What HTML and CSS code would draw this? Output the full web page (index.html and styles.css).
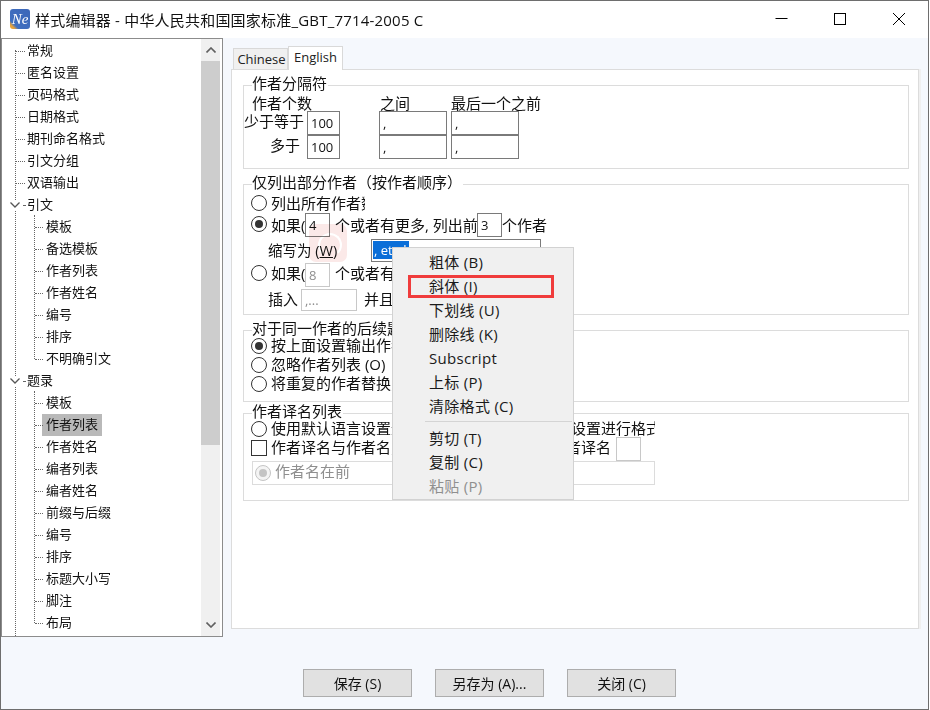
FILE: index.html
```html
<!DOCTYPE html>
<html lang="zh-CN">
<head>
<meta charset="utf-8">
<title>样式编辑器</title>
<link rel="stylesheet" href="styles.css">
</head>
<body>
<div class="window">
  <header class="titlebar">
    <div class="app-icon"><span>Ne</span></div>
    <div class="title">样式编辑器 - 中华人民共和国国家标准_GBT_7714-2005 C</div>
    <div class="win-controls">
      <svg class="win-btn" width="14" height="14" viewBox="0 0 14 14"><path d="M1.5 6.5h12" stroke="#000" fill="none"/></svg>
      <svg class="win-btn" width="14" height="14" viewBox="0 0 14 14"><rect x="1.5" y="1.5" width="11" height="11" stroke="#000" fill="none"/></svg>
      <svg class="win-btn" width="14" height="14" viewBox="0 0 14 14"><path d="M1 1l12 12M13 1L1 13" stroke="#000" fill="none"/></svg>
    </div>
  </header>

  <div class="main">
    <aside class="tree-panel">
      <div class="tree">
        <div class="row lvl0">常规</div>
        <div class="row lvl0">匿名设置</div>
        <div class="row lvl0">页码格式</div>
        <div class="row lvl0">日期格式</div>
        <div class="row lvl0">期刊命名格式</div>
        <div class="row lvl0">引文分组</div>
        <div class="row lvl0">双语输出</div>
        <div class="row lvl0 parent"><svg class="chev" width="10" height="6" viewBox="0 0 10 6"><path d="M.5.5L5 5 9.5.5" stroke="#555" stroke-width="1.3" fill="none"/></svg>引文</div>
        <div class="children">
          <div class="row lvl1">模板</div>
          <div class="row lvl1">备选模板</div>
          <div class="row lvl1">作者列表</div>
          <div class="row lvl1">作者姓名</div>
          <div class="row lvl1">编号</div>
          <div class="row lvl1">排序</div>
          <div class="row lvl1">不明确引文</div>
        </div>
        <div class="row lvl0 parent"><svg class="chev" width="10" height="6" viewBox="0 0 10 6"><path d="M.5.5L5 5 9.5.5" stroke="#555" stroke-width="1.3" fill="none"/></svg>题录</div>
        <div class="children">
          <div class="row lvl1">模板</div>
          <div class="row lvl1"><span class="selected">作者列表</span></div>
          <div class="row lvl1">作者姓名</div>
          <div class="row lvl1">编者列表</div>
          <div class="row lvl1">编者姓名</div>
          <div class="row lvl1">前缀与后缀</div>
          <div class="row lvl1">编号</div>
          <div class="row lvl1">排序</div>
          <div class="row lvl1">标题大小写</div>
          <div class="row lvl1">脚注</div>
          <div class="row lvl1">布局</div>
        </div>
      </div>
      <div class="scrollbar">
        <div class="sb-btn"><svg width="10" height="6" viewBox="0 0 10 6"><path d="M.5 5.5L5 1l4.5 4.5" stroke="#606060" stroke-width="1.6" fill="none"/></svg></div>
        <div class="sb-thumb"></div>
        <div class="sb-track"></div>
        <div class="sb-btn"><svg width="10" height="6" viewBox="0 0 10 6"><path d="M.5.5L5 5l4.5-4.5" stroke="#606060" stroke-width="1.6" fill="none"/></svg></div>
      </div>
    </aside>

    <section class="tabs-area">
      <div class="tab-strip">
        <div class="tab">Chinese</div>
        <div class="tab active">English</div>
      </div>
      <div class="pane">
        <div class="group g1">
          <div class="legend">作者分隔符</div>
          <div class="sep-head">
            <span class="h-count">作者个数</span>
            <span class="h-between">之间</span>
            <span>最后一个之前</span>
          </div>
          <div class="sep-row">
            <span class="sep-label">少于等于</span>
            <span class="input dark num">100</span>
            <span class="input dark wide gap-a">,</span>
            <span class="input dark wide gap-b">,</span>
          </div>
          <div class="sep-row">
            <span class="sep-label">多于</span>
            <span class="input dark num">100</span>
            <span class="input dark wide gap-a">,</span>
            <span class="input dark wide gap-b">,</span>
          </div>
        </div>

        <div class="group g2">
          <div class="legend">仅列出部分作者（按作者顺序）</div>
          <div class="opt h-a"><i class="radio"></i><span class="clip-all">列出所有作者数</span></div>
          <div class="opt h-b"><i class="radio on"></i><span class="if">如果(</span><span class="input dark small">4</span><span class="after">个或者有更多, 列出前</span><span class="input dark small">3</span><span>个作者</span></div>
          <div class="opt h-c indent"><span class="abbr-label">缩写为 (<u>W</u>)</span><span class="input dark abbr"><b class="sel">, et al.</b></span></div>
          <div class="opt h-b raise"><i class="radio"></i><span class="if">如果(</span><span class="input pale small muted">8</span><span class="after">个或者有更多</span></div>
          <div class="opt h-d indent"><span class="ins-label">插入</span><span class="input pale ins muted">,...</span><span class="and">并且</span></div>
        </div>

        <div class="group g3">
          <div class="legend tight">对于同一作者的后续题录</div>
          <div class="opt h-e"><i class="radio on"></i><span>按上面设置输出作者列表</span></div>
          <div class="opt h-e"><i class="radio"></i><span>忽略作者列表 (O)</span></div>
          <div class="opt h-e"><i class="radio"></i><span>将重复的作者替换为</span></div>
        </div>

        <div class="group g4">
          <div class="legend tight">作者译名列表</div>
          <div class="opt h-e"><i class="radio"></i><span class="clip-lang">使用默认语言设置进行格式，或按照每种语言设置进行格式</span></div>
          <div class="opt h-e"><i class="check"></i><span class="trans">作者译名与作者名之间插入分隔符<i class="pad"></i>后输出作者译名</span><span class="input pale small blank"></span></div>
          <div class="order-box"><i class="radio dis on"></i><span class="muted">作者名在前</span></div>
        </div>
      </div>
    </section>
  </div>

  <footer class="footer">
    <button class="btn">保存 (S)</button>
    <button class="btn">另存为 (A)...</button>
    <button class="btn">关闭 (C)</button>
  </footer>

  <div class="pink-mark"></div>

  <nav class="menu">
    <div class="m-item">粗体 (B)</div>
    <div class="m-item hl">斜体 (I)</div>
    <div class="m-item">下划线 (U)</div>
    <div class="m-item">删除线 (K)</div>
    <div class="m-item">Subscript</div>
    <div class="m-item">上标 (P)</div>
    <div class="m-item">清除格式 (C)</div>
    <div class="m-sep"></div>
    <div class="m-item">剪切 (T)</div>
    <div class="m-item">复制 (C)</div>
    <div class="m-item off">粘贴 (P)</div>
  </nav>
</div>
</body>
</html>
```
FILE: styles.css
```css
* { box-sizing: border-box; }
html, body { margin: 0; padding: 0; background: #fff; }
body { width: 930px; height: 710px; overflow: hidden; font-family: "Open Sans", "Noto Sans CJK SC", sans-serif; color: #111; }
i, b { font-style: normal; font-weight: normal; }

.window { position: relative; width: 929px; height: 710px; border: 1px solid #6e6e6e; background: #f5f8fd; display: flex; flex-direction: column; }

.titlebar { height: 37px; flex: none; background: #fff; display: flex; align-items: center; padding-left: 9px; }
.app-icon { width: 20px; height: 20px; margin-bottom: 1px; border-radius: 3px; background: linear-gradient(45deg, #e8a33a 0%, #e8a33a 12%, #3f6fc0 22%, #3c67b8 100%); display: flex; align-items: center; justify-content: center; }
.app-icon span { color: #fff; font: italic 15px "Liberation Serif", serif; }
.title { margin-left: 5px; font-size: 15px; line-height: 20px; letter-spacing: .2px; white-space: nowrap; flex: 1; }
.win-controls { display: flex; justify-content: flex-end; margin: 0 22px 1px 0; }
.win-btn { display: block; margin-left: 45px; }

.main { flex: none; height: 599px; display: flex; align-items: flex-start; }

.tree-panel { width: 222px; height: 599px; background: #fff; border: 1px solid #8c8c8c; display: flex; overflow: hidden; }
.tree { position: relative; width: 199px; height: 597px; overflow: hidden; flex: none; padding-top: 1px; font-size: 13px; }
.tree::before { content: ""; position: absolute; left: 13px; top: 11px; bottom: 0; border-left: 1px dotted #666; }
.row { position: relative; height: 22px; line-height: 20px; white-space: nowrap; }
.lvl0 { padding-left: 25px; }
.lvl1 { padding-left: 44px; }
.lvl0::before { content: ""; position: absolute; left: 14px; top: 11px; width: 9px; border-top: 1px dotted #666; }
.lvl1::before { content: ""; position: absolute; left: 33px; top: 11px; width: 8px; border-top: 1px dotted #666; }
.parent::before { left: 21px; width: 2px; }
.chev { position: absolute; left: 8px; top: 8px; background: #fff; box-shadow: 0 0 0 2px #fff; }
.children { position: relative; }
.children::before { content: ""; position: absolute; left: 32px; top: -1px; height: calc(100% - 10px); border-left: 1px dotted #666; }
.selected { display: inline-block; vertical-align: top; height: 22px; margin-left: -4px; padding: 0 4px; background: #b9b9b9; }

.scrollbar { width: 19px; flex: none; margin-right: 2px; display: flex; flex-direction: column; background: #f0f0f0; height: 597px; }
.sb-btn { height: 22px; flex: none; display: flex; align-items: center; justify-content: center; }
.sb-thumb { height: 384px; flex: none; background: #cdcdcd; }
.sb-track { flex: 1; }

.tabs-area { width: 692px; margin-left: 8px; padding-top: 7px; height: 599px; display: flex; flex-direction: column; }
.tab-strip { display: flex; align-items: flex-end; height: 24px; padding-left: 2px; position: relative; z-index: 1; }
.tab { width: 55px; height: 21px; border: 1px solid #d9d9d9; border-bottom: none; background: #f0f0f0; font-size: 13px; line-height: 20px; text-align: center; color: #222; padding-left: 2px; }
.tab.active { height: 24px; background: #fff; margin-bottom: -1px; line-height: 21px; padding-left: 0; }
.pane { width: 688px; height: 560px; background: #fff; border: 1px solid #dcdcdc; box-shadow: 2px 0 0 #f0f0f0; padding: 15px 10px 0 11px; }

.group { width: 666px; border: 1px solid #dcdcdc; font-size: 15px; }
.g1 { height: 84px; }
.g2 { height: 131px; margin-top: 15px; }
.g3 { height: 72px; margin-top: 15px; }
.g4 { height: 88px; margin-top: 11px; }
.legend { width: fit-content; height: 18px; margin: -12px 0 2px 8px; padding: 0 1px 0 0; background: #fff; line-height: 18px; white-space: nowrap; }
.legend.tight { margin-bottom: -1px; }

.sep-head { display: flex; height: 18px; margin-top: 1px; line-height: 18px; white-space: nowrap; margin-left: 8px; }
.h-count { width: 128px; }
.h-between { width: 71px; }
.sep-row { display: flex; height: 23px; }
.sep-head + .sep-row { margin-top: -1px; height: 24px; }
.sep-label { width: 63px; padding-right: 7px; text-align: right; line-height: 20px; white-space: nowrap; flex: none; overflow: visible; }

.input { display: inline-block; flex: none; height: 24px; background: #fff; font-size: 13px; line-height: 22px; padding-left: 3px; white-space: nowrap; overflow: hidden; }
.dark { border: 1px solid #7a7a7a; }
.pale { border: 1px solid #c8c8c8; }
.num { width: 33px; }
.wide { width: 68px; }
.gap-a { margin-left: 39px; }
.gap-b { margin-left: 4px; }
.small { width: 25px; }
.abbr { width: 170px; height: 23px; padding-left: 1px; line-height: 19px; }
.sel { display: inline-block; width: 36px; height: 18px; margin-top: 1px; padding-left: 1px; line-height: 18px; background: #0a6ed8; color: #fff; overflow: hidden; }
.ins { width: 56px; height: 22px; line-height: 20px; }
.muted { color: #8f8f8f; }

.opt { display: flex; align-items: center; padding-left: 7px; white-space: nowrap; }
.opt > span:not(.input) { margin-bottom: 2px; }
.h-a { height: 20px; }
.h-b { height: 24px; }
.h-b > .radio { margin-bottom: 2px; }
.h-c { height: 26px; }
.h-d { height: 22px; margin-top: 2px; }
.h-d > span:not(.input) { margin-bottom: 3px; }
.h-e { height: 19px; }
.raise > span:not(.input) { margin-bottom: 6px; }
.raise > .radio { margin-bottom: 4px; }
.indent { padding-left: 24px; }
.radio { display: block; flex: none; position: relative; width: 16px; height: 16px; margin-right: 4px; border: 1px solid #333; border-radius: 50%; background: #fff; }
.radio.on::after { content: ""; position: absolute; left: 3px; top: 3px; width: 8px; height: 8px; border-radius: 50%; background: #333; }
.radio.dis { border-color: #c4c4c4; background: #f4f4f4; }
.radio.dis.on::after { background: #c4c4c4; }
.check { display: block; flex: none; width: 16px; height: 16px; margin-right: 4px; border: 1px solid #333; background: #fff; }
.clip-all { width: 94px; overflow: hidden; }
.if { width: 34px; overflow: hidden; }
.after { margin-left: 5px; width: 142px; }
.abbr-label { width: 103px; font-size: 14.5px; }
.ins-label { width: 33px; }
.and { margin-left: 7px; }
.clip-lang { width: 384px; overflow: hidden; }
.trans { width: 340px; overflow: hidden; margin-right: 5px; }
.pad { display: inline-block; width: 10px; }
.blank { margin-top: 3px; }
.order-box { display: flex; align-items: center; width: 403px; height: 24px; margin: 4px 0 0 8px; padding-left: 2px; border: 1px solid #dcdcdc; }
.order-box .radio { margin-right: 4px; }
.order-box .muted { margin-bottom: 5px; }

.footer { flex: 1; display: flex; align-items: flex-start; padding: 32px 0 0 302px; gap: 23px; }
.btn { width: 109px; height: 28px; padding: 0; background: #e1e1e1; border: 1px solid #adadad; font: 14px "Open Sans", "Noto Sans CJK SC", sans-serif; color: #111; }

.pink-mark { position: absolute; left: 308px; top: 223px; width: 38px; height: 38px; border-radius: 7px; background: #fbe9e8; mix-blend-mode: multiply; }
.pink-mark::after { content: ""; position: absolute; left: 9px; top: 9px; width: 20px; height: 20px; border: 2px solid #fff; border-bottom-color: transparent; border-radius: 50%; }

.menu { position: absolute; left: 391px; top: 246px; width: 182px; height: 253px; padding: 2px 0 0; background: #f0f0f0; border: 1px solid #d2d2d2; z-index: 3; font-size: 15px; letter-spacing: .3px; }
.m-item { height: 24px; line-height: 24px; padding-left: 36px; white-space: nowrap; color: #1a1a1a; }
.m-sep { height: 1px; margin: 3px 1px 4px 32px; background: #d4d4d4; }
.off { color: #8f8f8f; }
.hl { position: relative; }
.hl::after { content: ""; position: absolute; left: 15px; top: 1px; width: 140px; height: 17px; border: 3px solid #f03c3c; }
```
